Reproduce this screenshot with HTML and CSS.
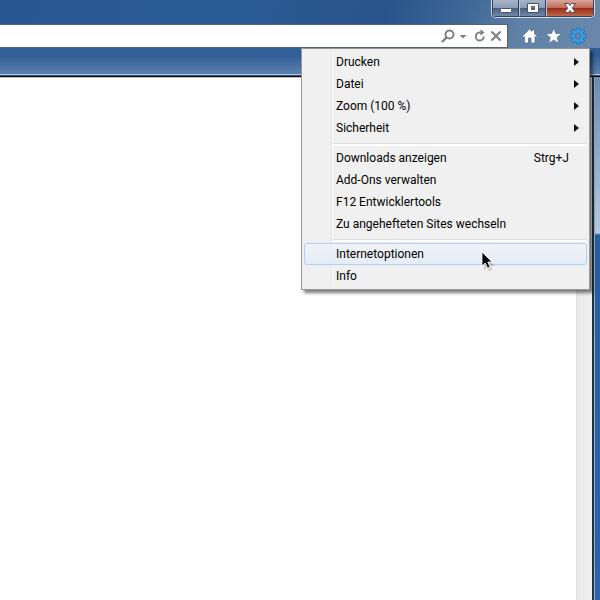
FILE: index.html
```html
<!DOCTYPE html>
<html lang="de">
<head>
<meta charset="utf-8">
<title>Internet Explorer</title>
<link rel="stylesheet" href="styles.css">
</head>
<body>
<div class="window">
  <header class="chrome">
    <div class="titlebar">
      <div class="caption">
        <button class="cap" aria-label="Minimieren"><svg width="16" height="14" viewBox="0 0 16 14"><rect x="2.500" y="6.500" width="11" height="4" rx="1" fill="#fff" stroke="#485468"/></svg></button>
        <button class="cap" aria-label="Maximieren"><svg width="16" height="14" viewBox="0 0 16 14"><path fill="#fff" fill-rule="evenodd" stroke="#485468" d="M2.500 1.500h11v9h-11zM6.500 4.500v3h3v-3z"/></svg></button>
        <button class="cap cap-close" aria-label="Schließen"><svg width="16" height="14" viewBox="0 0 16 14"><path fill="#fff" stroke="#584850" d="M2.500 1.500h4L8 3.500l1.500-2h4L10.300 6l3.200 4.500h-4L8 8.500l-1.500 2h-4L5.700 6z"/></svg></button>
      </div>
    </div>
    <div class="navbar">
      <div class="address">
        <input class="url" type="text" aria-label="Adresse">
        <button class="tool tool-search" aria-label="Suchen"><svg width="14" height="14" viewBox="0 0 14 14" fill="none" stroke="#808080" stroke-width="2"><circle cx="8.500" cy="5.500" r="4"/><path d="M5.500 8.500L1 13" stroke-width="2.400"/></svg></button>
        <button class="tool tool-drop" aria-label="Adressliste"><svg width="8" height="14" viewBox="0 0 8 14"><path d="M.5 6h7L4 9.500z" fill="#808080"/></svg></button>
        <button class="tool tool-reload" aria-label="Aktualisieren"><svg width="12" height="14" viewBox="0 0 12 14"><path d="M7 3.500H5.500A4 4 0 1 0 9.800 7.500" fill="none" stroke="#808080" stroke-width="2"/><path d="M6.500 .3L10.500 3.500 6.500 6.500z" fill="#808080"/></svg></button>
        <button class="tool tool-stop" aria-label="Abbrechen"><svg width="12" height="14" viewBox="0 0 12 14"><path d="M1.500 2.500l9 9m0-9l-9 9" stroke="#808080" stroke-width="2.200"/></svg></button>
      </div>
      <nav class="commands">
        <button class="tool" aria-label="Startseite"><svg width="18" height="18" viewBox="0 0 18 18"><path d="M8.500 2l2.500 2.400V3h2.500v3.800l2.500 2.500-1 1.200-1-1V16h-4v-5H7.500v5h-4V9.500l-1 1-1-1.200z" fill="#fff" stroke="#405a7c" stroke-width=".6"/></svg></button>
        <button class="tool" aria-label="Favoriten"><svg width="18" height="18" viewBox="0 0 18 18"><path d="M8.700 1l2.100 5.400 6 .2-4.700 3.900 1.800 6-5.200-3.500-5.200 3.500 1.800-6L.6 6.600l6-.2z" fill="#fff" stroke="#405a7c" stroke-width=".6"/></svg></button>
        <button class="tool" aria-label="Extras"><svg width="18" height="18" viewBox="0 0 18 18"><g fill="none"><path d="M9 .5v17M.5 9h17M3 3l12 12M15 3L3 15" stroke="#1f65a5" stroke-width="3.400"/><circle cx="9" cy="9" r="4.700" stroke="#1f65a5" stroke-width="3.600"/><path d="M9 1v16M1 9h16M3.400 3.400l11.200 11.200M14.600 3.400L3.400 14.600" stroke="#3b9fe8" stroke-width="2.200"/><circle cx="9" cy="9" r="4.600" stroke="#3b9fe8" stroke-width="2.600"/></g><circle cx="9" cy="9" r="3.200" fill="#6482a6" stroke="#2a70b0" stroke-width=".7"/></svg></button>
      </nav>
    </div>
    <div class="tabs"></div>
  </header>
  <div class="body">
    <main class="page"></main>
    <div class="scrollbar"></div>
    <div class="frame"></div>
  </div>

  <div class="menu" role="menu">
    <button class="item" role="menuitem">Drucken<span class="arrow"></span></button>
    <button class="item" role="menuitem">Datei<span class="arrow"></span></button>
    <button class="item" role="menuitem">Zoom (100 %)<span class="arrow"></span></button>
    <button class="item" role="menuitem">Sicherheit<span class="arrow"></span></button>
    <div class="separator" role="separator"></div>
    <button class="item" role="menuitem">Downloads anzeigen<span class="key">Strg+J</span></button>
    <button class="item" role="menuitem">Add-Ons verwalten</button>
    <button class="item" role="menuitem">F12 Entwicklertools</button>
    <button class="item" role="menuitem">Zu angehefteten Sites wechseln</button>
    <div class="separator" role="separator"></div>
    <button class="item item-active" role="menuitem">Internetoptionen</button>
    <button class="item" role="menuitem">Info</button>
  </div>
  <svg class="pointer" width="14" height="20" viewBox="0 0 14 20"><path d="M3 5v14l3-2 2 3 3-1-1-4h4z" fill="#000" opacity=".15"/><path d="M1 1v14l3.300-3 2.200 5 2.500-1-2.200-5H11z" fill="#000" stroke="#fff" stroke-width=".8"/></svg>
</div>
</body>
</html>
```
FILE: styles.css
```css
* {
  box-sizing: border-box;
}

body {
  margin: 0;
  font: 12px/16px Roboto, "Open Sans", sans-serif;
  color: #000;
}

button,
input {
  margin: 0;
  padding: 0;
  border: 0;
  background: none;
  font: inherit;
  color: inherit;
}

svg {
  display: block;
}

.window {
  position: relative;
  display: flex;
  flex-direction: column;
  min-height: 100vh;
  overflow: hidden;
}

.chrome {
  background: linear-gradient(110deg, #28588f 0%, #2a5b92 40%, #28548b 62%, #416a99 76%, #6080a6 84%, #6d8aac 100%);
}

.titlebar {
  display: flex;
  justify-content: flex-end;
  height: 24px;
  padding-right: 5px;
}

.caption {
  display: flex;
  height: 18px;
  border: 1px solid #d2dae5;
  border-top: 0;
  border-radius: 0 0 5px 5px;
  overflow: hidden;
}

.cap {
  display: flex;
  justify-content: center;
  width: 27px;
  padding-top: 2px;
  border: 1px solid #34435a;
  border-top: 0;
  background: linear-gradient(#a5b3c6 0, #8b9cb5 8px, #485f7f 8px, #7288a6 100%);
}

.cap + .cap {
  border-left-color: #b9c5d5;
}

.cap-close {
  width: 48px;
  background: linear-gradient(#d9a69d 0, #bf6857 8px, #9c2a12 8px, #bd6748 100%);
}

.navbar {
  display: flex;
  align-items: center;
  height: 24px;
}

.address {
  display: flex;
  flex: 1;
  align-items: center;
  height: 24px;
  padding-right: 5px;
  border: 1px solid #56616f;
  border-left: 0;
  background: #fff;
}

.url {
  flex: 1;
  min-width: 0;
  height: 20px;
  outline: 0;
}

.tool-search {
  margin-right: 4px;
}

.tool-drop {
  margin-right: 7px;
}

.tool-reload {
  margin-right: 4px;
}

.commands {
  display: flex;
  gap: 6px;
  padding: 0 13px;
}

.tabs {
  height: 29px;
  border-bottom: 1px solid #000;
  background: linear-gradient(#2d6095 0, #335f98 8px, #5b80ab 26px, #b4c5d8 26px, #b4c5d8 27px, #305e88 27px);
}

.body {
  display: flex;
  flex: 1;
}

.page {
  flex: 1;
  border-top: 1px solid #c4c4bc;
  background: #fff;
}

.scrollbar {
  width: 16px;
  border-left: 1px solid #e0e0e0;
  background: linear-gradient(90deg, #e8e8e8, #f0f0f0);
}

.frame {
  width: 8px;
  border-left: 2px solid #26303e;
  background: linear-gradient(#6d8cae 0, #88a4c4 60px, #b6cade 156px, #275d9b 158px, #2c66a8 100%);
  box-shadow: inset 1px 0 #8cb7dc;
}

.menu {
  position: absolute;
  top: 48px;
  right: 10px;
  display: flex;
  flex-direction: column;
  width: 289px;
  padding: 2px;
  border: 1px solid #979797;
  background: linear-gradient(90deg, transparent 29px, #e2e3e3 29px, #e2e3e3 30px, #fff 30px, #fff 31px, transparent 31px) 0 2px / 100% 236px no-repeat, #f0f0f0;
  box-shadow: 3px 3px 3px rgba(0, 0, 0, .5);
}

.item {
  display: flex;
  align-items: center;
  height: 22px;
  padding: 0 7px 0 31px;
  border: 1px solid transparent;
  border-radius: 3px;
  text-align: left;
}

.item-active {
  border-color: #aecff7;
  background: linear-gradient(rgba(240, 244, 250, .8), rgba(225, 234, 247, .7));
}

.arrow {
  margin-left: auto;
  border: 4px solid transparent;
  border-left: 5px solid #111;
  border-right: 0;
}

.key {
  margin-left: auto;
  padding-right: 10px;
}

.separator {
  height: 8px;
  padding-top: 4px;
  padding-left: 29px;
}

.separator::before {
  content: "";
  display: block;
  height: 2px;
  border-top: 1px solid #dedede;
  background: #fff;
}

.pointer {
  position: absolute;
  top: 251px;
  right: 105px;
}
```
